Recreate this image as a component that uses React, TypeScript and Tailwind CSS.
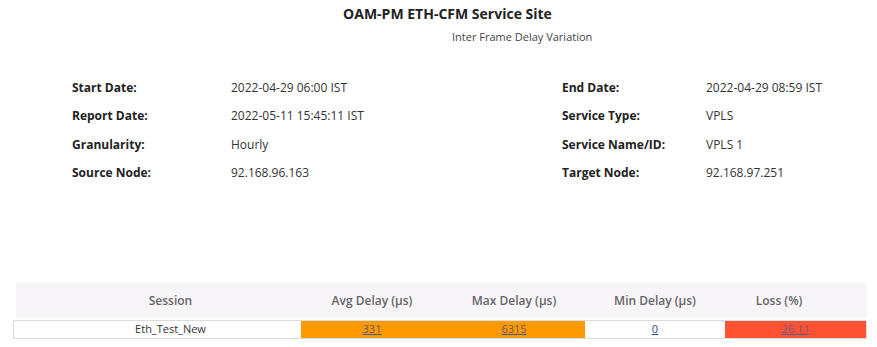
import React from 'react';

const leftInfo = [
  ['Start Date:', '2022-04-29 06:00 IST'],
  ['Report Date:', '2022-05-11 15:45:11 IST'],
  ['Granularity:', 'Hourly'],
  ['Source Node:', '92.168.96.163'],
];

const rightInfo = [
  ['End Date:', '2022-04-29 08:59 IST'],
  ['Service Type:', 'VPLS'],
  ['Service Name/ID:', 'VPLS 1'],
  ['Target Node:', '92.168.97.251'],
];

function InfoColumn({ rows, valueOffset }: { rows: string[][]; valueOffset: string }) {
  return (
    <div className="flex shrink-0 flex-col gap-[10.5px]">
      {rows.map(([label, value]) => (
        <div key={label} className="flex h-[18px] items-center whitespace-nowrap text-[12px]">
          <span className={`shrink-0 font-bold text-[#222] ${valueOffset}`}>{label}</span>
          <span className="text-[#333]">{value}</span>
        </div>
      ))}
    </div>
  );
}

export default function App() {
  return (
    <div className="w-[877px] h-[347px] bg-white font-['Open_Sans',sans-serif] text-[#333] overflow-hidden">
      <div className="pt-[3px] text-center text-[14px] font-bold text-[#222] pl-[18px]">
        OAM-PM ETH-CFM Service Site
      </div>
      <div className="mt-[5px] pl-[452px] text-[11px] text-[#444]">Inter Frame Delay Variation</div>

      <div className="mt-[33px] flex">
        <div className="w-[562px] shrink-0 pl-[72px]">
          <InfoColumn rows={leftInfo} valueOffset="w-[159px]" />
        </div>
        <InfoColumn rows={rightInfo} valueOffset="w-[144px]" />
      </div>

      <div className="mt-[101px] ml-[13px] w-[854px]">
        <div className="ml-[3px] flex h-[35px] items-center bg-[#f7f5f8] text-[12px] font-semibold text-[#666]">
          <div className="w-[285px] pl-[24px] text-center">Session</div>
          <div className="w-[142px] text-center">Avg Delay (µs)</div>
          <div className="w-[142px] text-center">Max Delay (µs)</div>
          <div className="w-[140px] text-center">Min Delay (µs)</div>
          <div className="w-[132px] pr-[24px] text-center">Loss (%)</div>
        </div>
        <div className="mt-[2px] flex h-[19px] border border-[#dcdcdc] text-[11px]">
          <div className="flex w-[287px] items-center justify-center pl-[26px] bg-white text-[#333]">Eth_Test_New</div>
          <div className="flex w-[142px] items-center justify-center bg-[#ff9900]">
            <a className="text-[#5a5a7a] underline">331</a>
          </div>
          <div className="flex w-[142px] items-center justify-center bg-[#ff9900]">
            <a className="text-[#5a5a7a] underline">6315</a>
          </div>
          <div className="flex w-[140px] items-center justify-center bg-white">
            <a className="text-[#2a4a8a] underline">0</a>
          </div>
          <div className="flex flex-1 items-center justify-center bg-[#ff5233]">
            <a className="text-[#6a5a8a] underline">26.11</a>
          </div>
        </div>
      </div>
    </div>
  );
}
